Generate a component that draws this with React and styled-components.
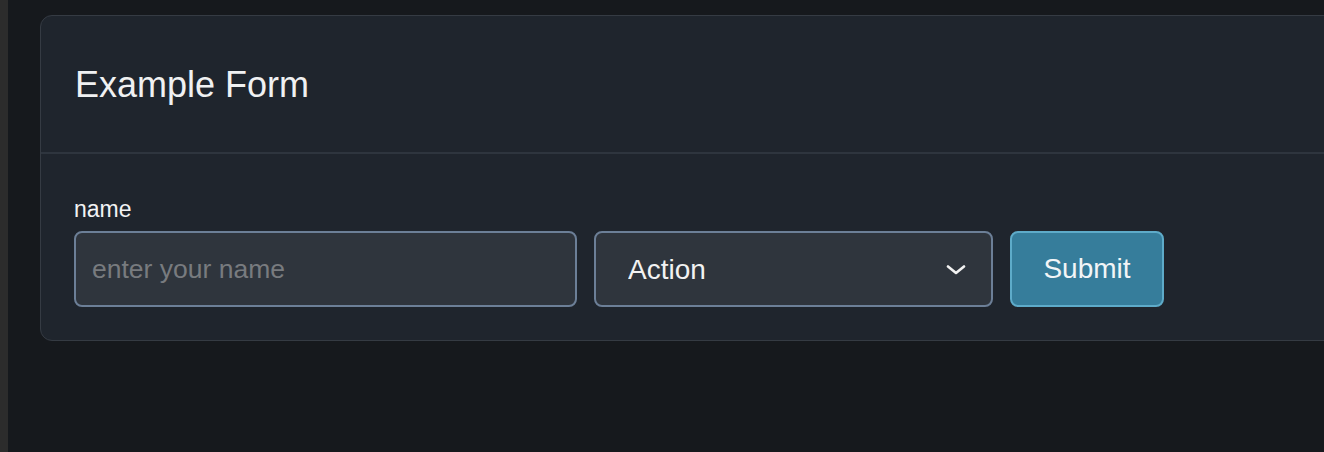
import React from 'react'
import styled, { createGlobalStyle } from 'styled-components'

const GlobalStyle = createGlobalStyle`
  html, body {
    margin: 0;
    padding: 0;
    background: #16191d;
    overflow: hidden;
    font-family: "Liberation Sans", Arial, Helvetica, sans-serif;
  }
`;

const App = () => {
  return (
    <Page>
      <GlobalStyle />
      <SideStrip />
      <Content>
        <Card>
          <CardHeader>
            <Title>Example Form</Title>
          </CardHeader>
          <CardBody>
            <form onSubmit={e => e.preventDefault()}>
              <Label htmlFor="name">name</Label>
              <Row>
                <TextInput id="name" name="name" type="text" placeholder="enter your name" />
                <SelectWrap>
                  <Select defaultValue="action">
                    <option value="action">Action</option>
                    <option value="other">Another action</option>
                  </Select>
                  <Chevron width="20" height="10" viewBox="0 0 20 10" fill="none">
                    <path d="M2 1.5 L10 8 L18 1.5" stroke="#f2f2f2" strokeWidth="2.6" strokeLinecap="round" strokeLinejoin="round" />
                  </Chevron>
                </SelectWrap>
                <SubmitButton type="submit">Submit</SubmitButton>
              </Row>
            </form>
          </CardBody>
        </Card>
      </Content>
    </Page>
  )
}

const Page = styled.div`
  display: flex;
  min-height: 100vh;
`;

const SideStrip = styled.div`
  width: 8px;
  flex-shrink: 0;
  background: #2c2c2c;
`;

const Content = styled.div`
  padding: 15px 0 0 32px;
`;

const Card = styled.div`
  width: 1320px;
  background: #1f252d;
  border: 1px solid #353b43;
  border-radius: 12px;
`;

const CardHeader = styled.div`
  box-sizing: border-box;
  height: 138px;
  display: flex;
  align-items: center;
  padding: 2px 0 0 34px;
  border-bottom: 2px solid #2e353e;
`;

const Title = styled.h2`
  margin: 0;
  font-size: 36px;
  font-weight: 400;
  color: #f0f1f2;
`;

const CardBody = styled.div`
  padding: 42px 33px 33px;
`;

const Label = styled.label`
  display: block;
  font-size: 23px;
  line-height: 26px;
  color: #f2f3f4;
  margin-bottom: 9px;
`;

const Row = styled.div`
  display: flex;
  gap: 17px;
`;

const fieldBase = `
  box-sizing: border-box;
  height: 76px;
  border: 2px solid #6c7f97;
  border-radius: 8px;
  background: #2f353d;
  font-family: "Liberation Sans", Arial, Helvetica, sans-serif;
  outline: none;
`;

const TextInput = styled.input`
  ${fieldBase}
  width: 503px;
  padding: 0 16px;
  font-size: 26.5px;
  color: #f0f0f0;
  &::placeholder {
    color: #787b7f;
  }
`;

const SelectWrap = styled.div`
  position: relative;
  width: 399px;
`;

const Select = styled.select`
  ${fieldBase}
  width: 100%;
  appearance: none;
  padding: 0 60px 0 32px;
  font-size: 28px;
  color: #f2f2f2;
`;

const Chevron = styled.svg`
  position: absolute;
  right: 27px;
  top: 34px;
  pointer-events: none;
`;

const SubmitButton = styled.button`
  box-sizing: border-box;
  width: 154px;
  height: 76px;
  border: 2px solid #5eabc9;
  border-radius: 8px;
  background: #367d9b;
  color: #f2f5f7;
  font-family: "Liberation Sans", Arial, Helvetica, sans-serif;
  font-size: 28px;
  cursor: pointer;
`;

export default App;
